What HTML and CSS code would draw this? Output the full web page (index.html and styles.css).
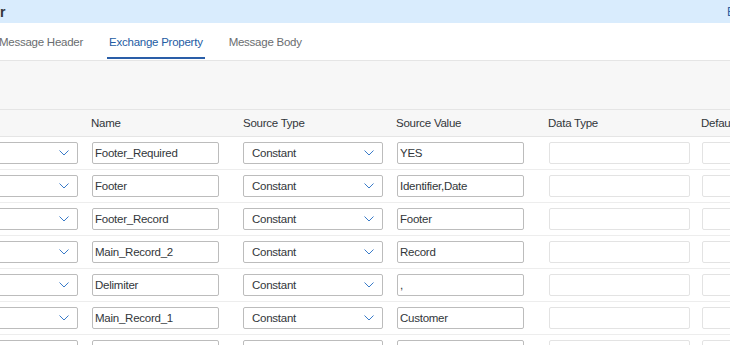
FILE: index.html
```html
<!DOCTYPE html>
<html>
<head>
<meta charset="utf-8">
<link rel="stylesheet" href="styles.css">
</head>
<body>
<div class="titlebar">
  <span class="title">r</span>
  <span class="link">Edit</span>
</div>
<div class="tabs">
  <div class="tab">Message Header</div>
  <div class="tab active">Exchange Property</div>
  <div class="tab">Message Body</div>
</div>
<div class="toolbar"></div>
<div class="table">
  <div class="row head">
    <div class="hcell"></div>
    <div class="hcell">Name</div>
    <div class="hcell">Source Type</div>
    <div class="hcell">Source Value</div>
    <div class="hcell">Data Type</div>
    <div class="hcell">Default Value</div>
  </div>
  <div class="row">
    <div class="cell"><div class="select wide"><span></span><svg class="chev" viewBox="0 0 10 6" width="10" height="6"><polyline points="0.5,0.5 5,5 9.5,0.5"/></svg></div></div>
    <div class="cell"><input class="field" value="Footer_Required"></div>
    <div class="cell"><div class="select"><span>Constant</span><svg class="chev" viewBox="0 0 10 6" width="10" height="6"><polyline points="0.5,0.5 5,5 9.5,0.5"/></svg></div></div>
    <div class="cell"><input class="field" value="YES"></div>
    <div class="cell"><input class="field light" value=""></div>
    <div class="cell"><input class="field light" value=""></div>
  </div>
  <div class="row">
    <div class="cell"><div class="select wide"><span></span><svg class="chev" viewBox="0 0 10 6" width="10" height="6"><polyline points="0.5,0.5 5,5 9.5,0.5"/></svg></div></div>
    <div class="cell"><input class="field" value="Footer"></div>
    <div class="cell"><div class="select"><span>Constant</span><svg class="chev" viewBox="0 0 10 6" width="10" height="6"><polyline points="0.5,0.5 5,5 9.5,0.5"/></svg></div></div>
    <div class="cell"><input class="field" value="Identifier,Date"></div>
    <div class="cell"><input class="field light" value=""></div>
    <div class="cell"><input class="field light" value=""></div>
  </div>
  <div class="row">
    <div class="cell"><div class="select wide"><span></span><svg class="chev" viewBox="0 0 10 6" width="10" height="6"><polyline points="0.5,0.5 5,5 9.5,0.5"/></svg></div></div>
    <div class="cell"><input class="field" value="Footer_Record"></div>
    <div class="cell"><div class="select"><span>Constant</span><svg class="chev" viewBox="0 0 10 6" width="10" height="6"><polyline points="0.5,0.5 5,5 9.5,0.5"/></svg></div></div>
    <div class="cell"><input class="field" value="Footer"></div>
    <div class="cell"><input class="field light" value=""></div>
    <div class="cell"><input class="field light" value=""></div>
  </div>
  <div class="row">
    <div class="cell"><div class="select wide"><span></span><svg class="chev" viewBox="0 0 10 6" width="10" height="6"><polyline points="0.5,0.5 5,5 9.5,0.5"/></svg></div></div>
    <div class="cell"><input class="field" value="Main_Record_2"></div>
    <div class="cell"><div class="select"><span>Constant</span><svg class="chev" viewBox="0 0 10 6" width="10" height="6"><polyline points="0.5,0.5 5,5 9.5,0.5"/></svg></div></div>
    <div class="cell"><input class="field" value="Record"></div>
    <div class="cell"><input class="field light" value=""></div>
    <div class="cell"><input class="field light" value=""></div>
  </div>
  <div class="row">
    <div class="cell"><div class="select wide"><span></span><svg class="chev" viewBox="0 0 10 6" width="10" height="6"><polyline points="0.5,0.5 5,5 9.5,0.5"/></svg></div></div>
    <div class="cell"><input class="field" value="Delimiter"></div>
    <div class="cell"><div class="select"><span>Constant</span><svg class="chev" viewBox="0 0 10 6" width="10" height="6"><polyline points="0.5,0.5 5,5 9.5,0.5"/></svg></div></div>
    <div class="cell"><input class="field" value=","></div>
    <div class="cell"><input class="field light" value=""></div>
    <div class="cell"><input class="field light" value=""></div>
  </div>
  <div class="row">
    <div class="cell"><div class="select wide"><span></span><svg class="chev" viewBox="0 0 10 6" width="10" height="6"><polyline points="0.5,0.5 5,5 9.5,0.5"/></svg></div></div>
    <div class="cell"><input class="field" value="Main_Record_1"></div>
    <div class="cell"><div class="select"><span>Constant</span><svg class="chev" viewBox="0 0 10 6" width="10" height="6"><polyline points="0.5,0.5 5,5 9.5,0.5"/></svg></div></div>
    <div class="cell"><input class="field" value="Customer"></div>
    <div class="cell"><input class="field light" value=""></div>
    <div class="cell"><input class="field light" value=""></div>
  </div>
  <div class="row">
    <div class="cell"><div class="select wide"><span></span><svg class="chev" viewBox="0 0 10 6" width="10" height="6"><polyline points="0.5,0.5 5,5 9.5,0.5"/></svg></div></div>
    <div class="cell"><input class="field" value=""></div>
    <div class="cell"><div class="select"><span>Constant</span><svg class="chev" viewBox="0 0 10 6" width="10" height="6"><polyline points="0.5,0.5 5,5 9.5,0.5"/></svg></div></div>
    <div class="cell"><input class="field" value=""></div>
    <div class="cell"><input class="field light" value=""></div>
    <div class="cell"><input class="field light" value=""></div>
  </div>
</div>
</body>
</html>
```
FILE: styles.css
```css
html, body {
  margin: 0;
  padding: 0;
}
body {
  width: 730px;
  height: 345px;
  overflow: hidden;
  background: #ffffff;
  color: #32363a;
  font-family: "Liberation Sans", Arial, sans-serif;
  font-size: 11.5px;
  letter-spacing: -0.25px;
}
.titlebar {
  height: 23px;
  background: #d9ecfd;
  display: flex;
  align-items: center;
  justify-content: space-between;
  overflow: hidden;
}
.title {
  font-weight: bold;
  font-size: 14px;
  letter-spacing: 0;
  color: #32363a;
  margin-left: 0;
}
.link {
  font-size: 12px;
  color: #2c5f9e;
  width: 24px;
  margin-right: -21px;
  white-space: nowrap;
}
.tabs {
  height: 36px;
  padding-bottom: 1px;
  border-bottom: 1px solid #e5e5e5;
  display: flex;
  gap: 22px;
  margin-left: -3px;
}
.tab {
  padding: 4px 2px 0;
  display: flex;
  align-items: center;
  color: #6a6d70;
  border-bottom: 2px solid transparent;
  white-space: nowrap;
}
.tab.active {
  color: #245ca3;
  border-bottom-color: #2a5ea8;
}
.toolbar {
  height: 48px;
  background: #f7f7f7;
  border-bottom: 1px solid #e5e5e5;
}
.table {
  margin-left: -62px;
  width: 916px;
}
.row {
  display: grid;
  grid-template-columns: 153px 152px 153px 152px 153px 153px;
  height: 32px;
  align-items: center;
  border-bottom: 1px solid #ededed;
}
.row.head {
  height: 26px;
  background: #f7f7f7;
  border-bottom: 1px solid #e5e5e5;
}
.hcell {
  white-space: nowrap;
  color: #32363a;
}
.cell {
  padding-left: 1px;
  display: flex;
  align-items: center;
}
.field {
  box-sizing: border-box;
  width: 127px;
  height: 22px;
  margin: 0;
  border: 1px solid #bcbcbc;
  border-radius: 2px;
  padding: 0 2px;
  font: inherit;
  letter-spacing: inherit;
  color: #32363a;
  background: #ffffff;
  outline: none;
}
.field.light {
  width: 141px;
  border-color: #e3e3e3;
}
.select {
  box-sizing: border-box;
  width: 140px;
  height: 22px;
  margin-left: -1px;
  border: 1px solid #bcbcbc;
  border-radius: 2px;
  padding: 0 8px 0 8px;
  display: flex;
  align-items: center;
  justify-content: space-between;
  background: #ffffff;
}
.select.wide {
  width: 139px;
  margin-left: 0;
}
.chev {
  display: block;
  fill: none;
  stroke: #3a7bc8;
  stroke-width: 1;
}
```
